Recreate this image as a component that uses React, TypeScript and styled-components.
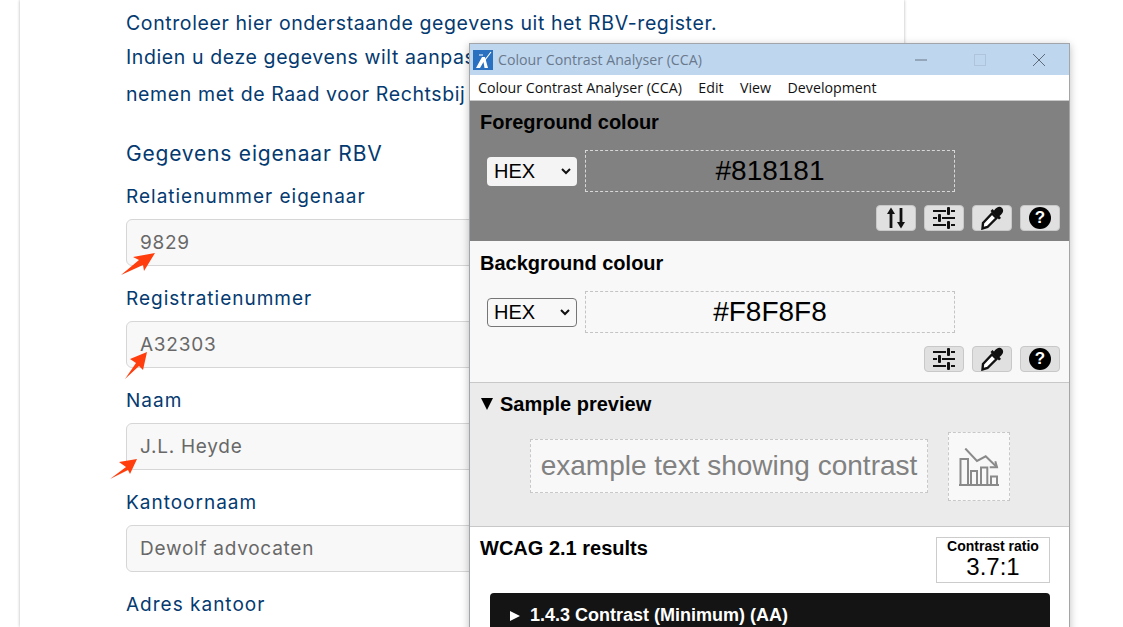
import { ReactNode } from "react";
import styled, { createGlobalStyle } from "styled-components";

const GlobalStyle = createGlobalStyle`
  html, body {
    margin: 0;
    height: 627px;
    overflow: hidden;
    background: #fff;
  }
`;

const FIELDS = [
  { label: "Relatienummer eigenaar", value: "9829", arrow: { left: -7, top: 31, points: "1,24 19,9 13,6 35,2 24,20 23,14" } },
  { label: "Registratienummer", value: "A32303", arrow: { left: -3, top: 28, points: "1,29 12,13 6,9 23,2 19,20 15,16" } },
  { label: "Naam", value: "J.L. Heyde", arrow: { left: -18, top: 33, points: "1,22 17,10 10,5 28,2 21,17 19,13" } },
  { label: "Kantoornaam", value: "Dewolf advocaten" },
];

export default function App() {
  return (
    <>
      <GlobalStyle />
      <Page>
        <Card>
          <Intro>Controleer hier onderstaande gegevens uit het RBV-register.</Intro>
          <Intro>Indien u deze gegevens wilt aanpas</Intro>
          <Intro>nemen met de Raad voor Rechtsbij</Intro>
          <SectionTitle>Gegevens eigenaar RBV</SectionTitle>
          {FIELDS.map((f) => (
            <Field key={f.label}>
              <Label>{f.label}</Label>
              <InputBox>
                {f.value}
                {f.arrow && (
                  <ArrowSvg $left={f.arrow.left} $top={f.arrow.top} width="36" height="30" viewBox="0 0 36 30">
                    <polygon points={f.arrow.points} fill="#ff3d0d" />
                  </ArrowSvg>
                )}
              </InputBox>
            </Field>
          ))}
          <Label>Adres kantoor</Label>
        </Card>
      </Page>
      <Win>
        <TitleBar>
          <AppIcon />
          <TitleText>Colour Contrast Analyser (CCA)</TitleText>
          <WinControls>
            <svg width="14" height="14" viewBox="0 0 14 14"><path d="M1 7h12" stroke="#6a7685" /></svg>
            <svg width="14" height="14" viewBox="0 0 14 14"><rect x="1.5" y="1.5" width="11" height="11" fill="none" stroke="#afc4dc" /></svg>
            <svg width="14" height="14" viewBox="0 0 14 14"><path d="M1 1l12 12M13 1L1 13" stroke="#5f6b78" /></svg>
          </WinControls>
        </TitleBar>
        <MenuBar>
          <span>Colour Contrast Analyser (CCA)</span>
          <span>Edit</span>
          <span>View</span>
          <span>Development</span>
        </MenuBar>
        <ColourSection $bg="#818181" $height={140} $pad={10}>
          <Heading>Foreground colour</Heading>
          <ColourRow>
            <FormatSelect $plain><span>HEX</span><Chevron /></FormatSelect>
            <HexBox $border="#d8d8d8">#818181</HexBox>
          </ColourRow>
          <Tools>
            <ToolButton><SwapIcon /></ToolButton>
            <ToolButton><SliderIcon /></ToolButton>
            <ToolButton><DropperIcon /></ToolButton>
            <ToolButton><HelpIcon>?</HelpIcon></ToolButton>
          </Tools>
        </ColourSection>
        <ColourSection $bg="#f8f8f8" $height={141} $pad={11}>
          <Heading>Background colour</Heading>
          <ColourRow>
            <FormatSelect><span>HEX</span><Chevron /></FormatSelect>
            <HexBox $border="#c4c4c4">#F8F8F8</HexBox>
          </ColourRow>
          <Tools>
            <ToolButton><SliderIcon /></ToolButton>
            <ToolButton><DropperIcon /></ToolButton>
            <ToolButton><HelpIcon>?</HelpIcon></ToolButton>
          </Tools>
        </ColourSection>
        <PreviewSection>
          <PreviewHeading><PreviewCaret />Sample preview</PreviewHeading>
          <PreviewRow>
            <SampleText>example text showing contrast</SampleText>
            <SampleIcon><ChartIcon /></SampleIcon>
          </PreviewRow>
        </PreviewSection>
        <Results>
          <ResultsTop>
            <ResultsTitle>WCAG 2.1 results</ResultsTitle>
            <RatioBox>
              <RatioLabel>Contrast ratio</RatioLabel>
              <RatioValue>3.7:1</RatioValue>
            </RatioBox>
          </ResultsTop>
          <Criterion><CriterionCaret />1.4.3 Contrast (Minimum) (AA)</Criterion>
        </Results>
      </Win>
    </>
  );
}

function Svg({ w, h, children }: { w: number; h: number; children: ReactNode }) {
  return <svg width={w} height={h} viewBox={`0 0 ${w} ${h}`}>{children}</svg>;
}

function AppIcon() {
  return (
    <LogoBox>
      <Svg w={20} h={20}>
        <path d="M3 18 L9 7 L12 7 L15 18 L11.5 18 L10.5 12 L7 18 Z" fill="#fff" />
        <path d="M18 2 L12 10 M6 5 L10 5" stroke="#fff" strokeWidth="1.1" fill="none" />
      </Svg>
    </LogoBox>
  );
}

function Chevron() {
  return (
    <svg width="12" height="8" viewBox="0 0 12 8">
      <path d="M2 2l4 4 4-4" fill="none" stroke="#111" strokeWidth="2" />
    </svg>
  );
}

function SwapIcon() {
  return (
    <Svg w={20} h={22}>
      <path d="M5 21V4" stroke="#111" strokeWidth="2.8" />
      <path d="M1 7L5 0.5 9 7Z" fill="#111" />
      <path d="M15 1v17" stroke="#111" strokeWidth="2.8" />
      <path d="M11 15L15 21.5 19 15Z" fill="#111" />
    </Svg>
  );
}

function SliderIcon() {
  return (
    <Svg w={22} h={22}>
      <path d="M0 4h13M18 4h4M0 11h4M9 11h13M0 18h13M18 18h4" stroke="#111" strokeWidth="2" />
      <rect x="14" y="0" width="3" height="8" rx="1" fill="#111" />
      <rect x="5" y="7" width="3" height="8" rx="1" fill="#111" />
      <rect x="14" y="14" width="3" height="8" rx="1" fill="#111" />
    </Svg>
  );
}

function DropperIcon() {
  return (
    <svg width="24" height="24" viewBox="0 0 24 24">
      <path d="M14 4.5 C17 0.5 20 0 22 2 C24 4 23.5 7 19.5 10 L21 12 L19 13.5 L10.5 5 L12.5 3 Z" fill="#111" />
      <path d="M12 7.5 L16.5 12 L7.5 21 L2.5 22.5 L3 17 Z" fill="#fff" stroke="#111" strokeWidth="2.4" />
    </svg>
  );
}

function ChartIcon() {
  return (
    <svg width="40" height="38" viewBox="0 0 40 38" fill="none" stroke="#8a8a8a" strokeWidth="2">
      <path d="M6.3 0.5L18 13l8.7-4.7L38 19.3" />
      <path d="M36.3 13.3L38 19.3h-7.3" />
      <path d="M0 37h40" strokeWidth="2.2" />
      <rect x="1.5" y="11" width="7.5" height="26" />
      <rect x="12" y="23" width="6" height="14" />
      <rect x="22" y="19.5" width="6.3" height="17.5" />
      <rect x="32" y="28.5" width="6" height="8.5" />
    </svg>
  );
}

const Page = styled.div`
  height: 627px;
  padding-left: 20px;
  overflow: hidden;
  font-family: "Inter", "Noto Sans", sans-serif;
  color: #043a70;
`;

const Card = styled.div`
  width: 778px;
  height: 627px;
  padding-left: 106px;
  background: #fff;
  box-shadow: 0 0 3px rgba(0, 0, 0, 0.3);
`;

const Intro = styled.p`
  margin: 0;
  height: 35px;
  line-height: 35px;
  font-size: 19.5px;
  letter-spacing: 0.6px;
  white-space: nowrap;
  &:first-child {
    height: 40px;
    line-height: 46px;
  }
  &:nth-child(3) {
    height: 36px;
    line-height: 39px;
  }
`;

const SectionTitle = styled.h2`
  margin: 24px 0 0;
  height: 51px;
  line-height: 38px;
  font-size: 21px;
  font-weight: 400;
  letter-spacing: 0.8px;
`;

const Field = styled.div`
  height: 102px;
`;

const Label = styled.div`
  height: 22px;
  line-height: 22px;
  font-size: 19px;
  letter-spacing: 1px;
  margin-bottom: 11px;
`;

const InputBox = styled.div`
  position: relative;
  height: 45px;
  width: 680px;
  padding-left: 13px;
  line-height: 45px;
  font-size: 19px;
  letter-spacing: 0.75px;
  color: #686868;
  background: #f8f8f8;
  border: 1px solid #d6d6d6;
  border-radius: 6px;
`;

const ArrowSvg = styled.svg<{ $left: number; $top: number }>`
  position: absolute;
  left: ${(p) => p.$left}px;
  top: ${(p) => p.$top}px;
`;

const Win = styled.div`
  position: absolute;
  left: 469px;
  top: 43px;
  width: 599px;
  height: 600px;
  background: #fff;
  border: 1px solid #a2a6ab;
  box-shadow: 0 2px 8px rgba(0, 0, 0, 0.25);
  font-family: "Liberation Sans", Arial, sans-serif;
  color: #000;
`;

const TitleBar = styled.div`
  height: 31px;
  display: flex;
  align-items: center;
  padding-left: 3px;
  background: #bfd6ef;
`;

const LogoBox = styled.div`
  width: 20px;
  height: 20px;
  background: #2a70c0;
  display: flex;
`;

const TitleText = styled.span`
  margin-left: 5px;
  font-family: "Open Sans", sans-serif;
  font-size: 14.2px;
  color: #69798c;
`;

const WinControls = styled.div`
  margin-left: auto;
  margin-right: 23px;
  display: flex;
  gap: 45px;
`;

const MenuBar = styled.div`
  height: 25px;
  display: flex;
  align-items: center;
  gap: 16.5px;
  padding-left: 8px;
  background: #fff;
  border-bottom: 1px solid #c8c8c8;
  font-family: "Open Sans", sans-serif;
  font-size: 14.2px;
  color: #111;
`;

const ColourSection = styled.section<{ $bg: string; $height: number; $pad: number }>`
  height: ${(p) => p.$height}px;
  box-sizing: border-box;
  padding: ${(p) => p.$pad}px 9px 0 10px;
  background: ${(p) => p.$bg};
`;

const Heading = styled.h3`
  margin: 0;
  height: 22px;
  line-height: 22px;
  font-size: 20px;
  font-weight: 700;
`;

const ColourRow = styled.div`
  margin-top: 17px;
  display: flex;
  align-items: center;
  gap: 8px;
  padding-left: 7px;
`;

const FormatSelect = styled.div<{ $plain?: boolean }>`
  width: 90px;
  height: 29px;
  box-sizing: border-box;
  display: flex;
  align-items: center;
  justify-content: space-between;
  padding: 0 5px 0 ${(p) => (p.$plain ? 7 : 6)}px;
  background: ${(p) => (p.$plain ? "#f4f4f4" : "#f8f8f8")};
  border: ${(p) => (p.$plain ? "none" : "1px solid #767676")};
  border-radius: 4px;
  font-size: 20px;
`;

const HexBox = styled.div<{ $border: string }>`
  width: 370px;
  height: 42px;
  box-sizing: border-box;
  border: 1px dashed ${(p) => p.$border};
  text-align: center;
  line-height: 40px;
  font-size: 28px;
`;

const Tools = styled.div`
  margin-top: 13px;
  display: flex;
  justify-content: flex-end;
  gap: 8px;
`;

const ToolButton = styled.div`
  width: 40px;
  height: 26px;
  box-sizing: border-box;
  display: flex;
  align-items: center;
  justify-content: center;
  background: #e0e0e0;
  border: 1px solid #c8c8c8;
  border-radius: 4px;
`;

const HelpIcon = styled.span`
  width: 22px;
  height: 22px;
  border-radius: 50%;
  background: #000;
  color: #fff;
  font-size: 17px;
  font-weight: 700;
  line-height: 22px;
  text-align: center;
`;

const PreviewSection = styled.section`
  height: 145px;
  box-sizing: border-box;
  padding: 10px 10px 0;
  background: #ebebeb;
  border-top: 1px solid #c8c8c8;
  border-bottom: 1px solid #c8c8c8;
`;

const PreviewHeading = styled.h3`
  margin: 0;
  height: 22px;
  line-height: 22px;
  font-size: 20px;
  font-weight: 700;
  display: flex;
  align-items: center;
`;

const PreviewCaret = styled.span`
  width: 0;
  height: 0;
  margin: 0 7px 0 1px;
  border-left: 6.5px solid transparent;
  border-right: 6.5px solid transparent;
  border-top: 12px solid #000;
`;

const PreviewRow = styled.div`
  margin-top: 17px;
  display: flex;
  align-items: flex-start;
  gap: 20px;
  padding-left: 50px;
`;

const SampleText = styled.div`
  width: 398px;
  height: 54px;
  margin-top: 7px;
  box-sizing: border-box;
  border: 1px dashed #c8c8c8;
  background: #f8f8f8;
  color: #818181;
  font-size: 28px;
  line-height: 52px;
  text-align: center;
  white-space: nowrap;
`;

const SampleIcon = styled.div`
  width: 62px;
  height: 69px;
  box-sizing: border-box;
  border: 1px dashed #c8c8c8;
  background: #f8f8f8;
  display: flex;
  align-items: center;
  justify-content: center;
`;

const Results = styled.section`
  padding: 10px 19px 0 10px;
`;

const ResultsTop = styled.div`
  display: flex;
  justify-content: space-between;
  align-items: flex-start;
`;

const ResultsTitle = styled.h3`
  margin: 0;
  font-size: 20px;
  line-height: 22px;
  font-weight: 700;
`;

const RatioBox = styled.div`
  width: 114px;
  height: 46px;
  box-sizing: border-box;
  border: 1px solid #ccc;
  text-align: center;
`;

const RatioLabel = styled.div`
  font-size: 14px;
  font-weight: 700;
  line-height: 16px;
`;

const RatioValue = styled.div`
  font-size: 24px;
  line-height: 26px;
`;

const Criterion = styled.div`
  margin: 10px 0 0 10px;
  height: 60px;
  padding: 11px 0 0 20px;
  box-sizing: border-box;
  background: #141414;
  border-radius: 4px;
  color: #fff;
  font-size: 18px;
  font-weight: 700;
  line-height: 22px;
`;

const CriterionCaret = styled.span`
  display: inline-block;
  width: 0;
  height: 0;
  margin-right: 10px;
  border-top: 5px solid transparent;
  border-bottom: 5px solid transparent;
  border-left: 10px solid #fff;
`;
